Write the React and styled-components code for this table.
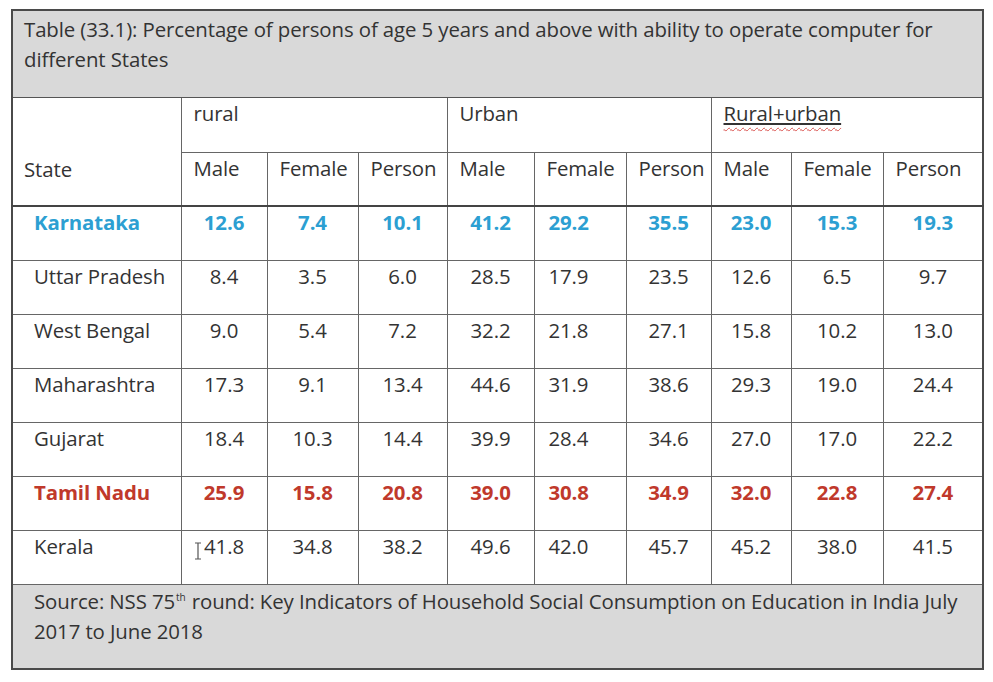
import React from 'react';
import styled, { createGlobalStyle } from 'styled-components';

const GlobalStyle = createGlobalStyle`
  html, body {
    margin: 0;
    padding: 0;
    background: #ffffff;
  }
  body {
    font-family: "Open Sans", Lato, sans-serif;
    color: #333333;
  }
`;

const widths = [169, 86, 91, 89, 87, 92, 85, 80, 92, 100];

const rows = [
  { state: 'Karnataka', tone: 'blue', values: ['12.6', '7.4', '10.1', '41.2', '29.2', '35.5', '23.0', '15.3', '19.3'] },
  { state: 'Uttar Pradesh', values: ['8.4', '3.5', '6.0', '28.5', '17.9', '23.5', '12.6', '6.5', '9.7'] },
  { state: 'West Bengal', values: ['9.0', '5.4', '7.2', '32.2', '21.8', '27.1', '15.8', '10.2', '13.0'] },
  { state: 'Maharashtra', values: ['17.3', '9.1', '13.4', '44.6', '31.9', '38.6', '29.3', '19.0', '24.4'] },
  { state: 'Gujarat', values: ['18.4', '10.3', '14.4', '39.9', '28.4', '34.6', '27.0', '17.0', '22.2'] },
  { state: 'Tamil Nadu', tone: 'red', values: ['25.9', '15.8', '20.8', '39.0', '30.8', '34.9', '32.0', '22.8', '27.4'] },
  { state: 'Kerala', cursor: true, values: ['41.8', '34.8', '38.2', '49.6', '42.0', '45.7', '45.2', '38.0', '41.5'] },
];

const tones = {
  blue: '#2c9fd2',
  red: '#c0392b',
};

const Page = styled.div`
  padding: 9px 0 0 11px;
`;

const Table = styled.table`
  width: 971px;
  border-collapse: collapse;
  table-layout: fixed;
  border: 2px solid #4a4a4a;
  font-size: 20.4px;
  letter-spacing: -0.1px;
`;

const Band = styled.td`
  background: #d9d9d9;
  border: 1px solid #555;
  vertical-align: top;
  line-height: 30px;
  padding: ${({ $pad }) => $pad};
  height: ${({ $h }) => $h}px;
  box-sizing: border-box;
`;

const GroupHead = styled.th`
  font-weight: normal;
  text-align: left;
  vertical-align: top;
  line-height: 24px;
  padding: 3px 6px 0 12px;
  height: 55px;
  box-sizing: border-box;
  border: 1px solid #666;
  white-space: nowrap;
`;

const StateHead = styled(GroupHead)`
  padding: 59px 11px 0;
  border-bottom: 2px solid #444;
`;

const SubHead = styled(GroupHead)`
  height: 54px;
  border-bottom: 2px solid #444;
`;

const Underlined = styled.span`
  text-decoration: underline wavy #d9534f;
  text-underline-offset: 6px;
  text-decoration-thickness: 1px;
`;

const Plain = styled.span`
  text-decoration: underline solid #333;
  text-underline-offset: 2px;
`;

const Cell = styled.td`
  height: 54px;
  box-sizing: border-box;
  vertical-align: top;
  line-height: 24px;
  padding-top: 3px;
  padding-left: ${({ $left }) => ($left ? '14px' : '0')};
  padding-right: 0;
  text-align: ${({ $left }) => ($left ? 'left' : 'center')};
  border: 1px solid #666;
  white-space: nowrap;
  color: ${({ $tone }) => tones[$tone] || '#333'};
  font-weight: ${({ $tone }) => ($tone ? 700 : 400)};
`;

const StateCell = styled(Cell)`
  text-align: left;
  padding-left: 21px;
`;

const Cursor = styled.svg`
  width: 8px;
  height: 18px;
  vertical-align: -6px;
  margin-left: -10px;
  margin-right: 2px;
`;

const Sup = styled.sup`
  font-size: 10px;
  vertical-align: super;
  line-height: 0;
  margin: 0 1px;
`;

const IBeam = () => (
  <Cursor viewBox="0 0 8 18">
    <path d="M1 1h6M4 1v16M1 17h6" stroke="#555" strokeWidth="1.2" fill="none" />
  </Cursor>
);

const App = () => {
  return (
    <>
      <GlobalStyle />
      <Page>
        <Table>
          <colgroup>
            {widths.map((w, i) => (
              <col key={i} style={{ width: w }} />
            ))}
          </colgroup>
          <tbody>
            <tr>
              <Band colSpan={10} $h={87} $pad="3px 16px 0 11px">
                Table (33.1): Percentage of persons of age 5 years and above with ability to operate computer for
                different States
              </Band>
            </tr>
            <tr>
              <StateHead rowSpan={2}>State</StateHead>
              <GroupHead colSpan={3}>rural</GroupHead>
              <GroupHead colSpan={3}>Urban</GroupHead>
              <GroupHead colSpan={3}>
                <Underlined>
                  <Plain>Rural+urban</Plain>
                </Underlined>
              </GroupHead>
            </tr>
            <tr>
              {['Male', 'Female', 'Person', 'Male', 'Female', 'Person', 'Male', 'Female', 'Person'].map((h, i) => (
                <SubHead key={i}>{h}</SubHead>
              ))}
            </tr>
            {rows.map((row) => (
              <tr key={row.state}>
                <StateCell $tone={row.tone}>{row.state}</StateCell>
                {row.values.map((v, i) => (
                  <Cell key={i} $tone={row.tone} $left={i === 4}>
                    {row.cursor && i === 0 && <IBeam />}
                    {v}
                  </Cell>
                ))}
              </tr>
            ))}
            <tr>
              <Band colSpan={10} $h={85} $pad="1px 14px 0 21px">
                Source: NSS 75<Sup>th</Sup> round: Key Indicators of Household Social Consumption on Education in India July
                2017 to June 2018
              </Band>
            </tr>
          </tbody>
        </Table>
      </Page>
    </>
  );
};

export default App;
